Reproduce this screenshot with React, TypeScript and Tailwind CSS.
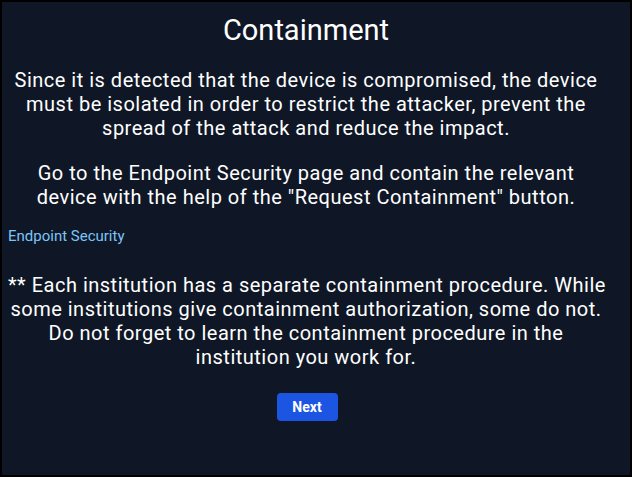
const Lines = ({ lines }: { lines: string[] }) => (
  <>
    {lines.map((l, i) => (
      <span key={i} className="block whitespace-nowrap">{l}</span>
    ))}
  </>
)

export default function App() {
  return (
    <div className="h-[477px] w-[632px] bg-black p-[2px]" style={{ fontFamily: 'Roboto, sans-serif' }}>
      <div className="flex h-full w-full flex-col bg-[#0f1726] pl-[6px] pr-[26px] text-white">
        <h1 className="mt-[10px] text-center text-[29px] leading-[36px]">Containment</h1>
        <p className="mt-[20px] text-center text-[20px] leading-[24px] tracking-[0.5px]">
          <Lines lines={[
            'Since it is detected that the device is compromised, the device',
            'must be isolated in order to restrict the attacker, prevent the',
            'spread of the attack and reduce the impact.',
          ]} />
        </p>
        <p className="mt-[21px] text-center text-[20px] leading-[24px] tracking-[0.5px]">
          <Lines lines={[
            'Go to the Endpoint Security page and contain the relevant',
            'device with the help of the "Request Containment" button.',
          ]} />
        </p>
        <a className="mt-[17px] text-[15px] leading-[20px] text-[#7cc4f8]">Endpoint Security</a>
        <p className="mt-[27px] text-center text-[20px] leading-[24px] tracking-[0.5px]">
          <Lines lines={[
            '** Each institution has a separate containment procedure. While',
            'some institutions give containment authorization, some do not.',
            'Do not forget to learn the containment procedure in the',
            'institution you work for.',
          ]} />
        </p>
        <div className="mt-[24px] flex justify-center pl-[2px]">
          <button className="h-[28px] w-[61px] rounded-[4px] bg-[#1d55e3] text-[14px] font-bold text-white">Next</button>
        </div>
      </div>
    </div>
  )
}
